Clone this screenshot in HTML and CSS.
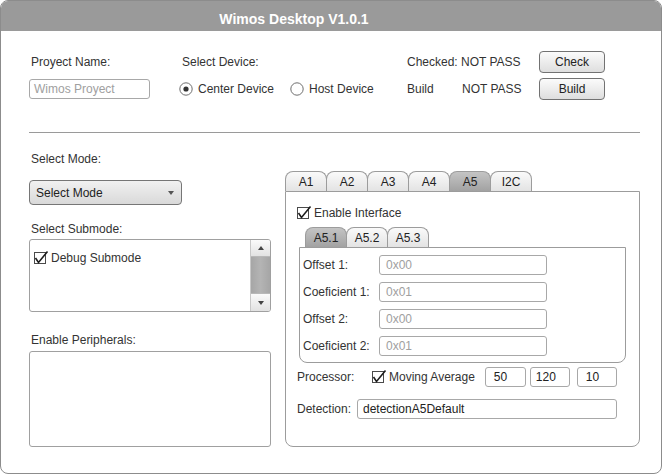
FILE: index.html
```html
<!DOCTYPE html>
<html>
<head>
<meta charset="utf-8">
<title>Wimos Desktop</title>
<link rel="stylesheet" href="styles.css">
</head>
<body>
<div class="window">
  <div class="titlebar">Wimos Desktop V1.0.1</div>
  <div class="content">
    <div class="top">
      <div class="lbl pl2">Proyect Name:</div>
      <div class="lbl pl3">Select Device:</div>
      <div class="lbl">Checked: NOT PASS</div>
      <div class="btn">Check</div>

      <div class="cell"><div class="input proj placeholder">Wimos Proyect</div></div>
      <div class="radios">
        <span class="radio">
          <svg width="14" height="14" viewBox="0 0 14 14"><circle cx="7" cy="7" r="6.2" fill="#fff" stroke="#6e6e6e" stroke-width="1"/><circle cx="7" cy="7" r="2.6" fill="#333"/></svg>
          Center Device
        </span>
        <span class="radio second">
          <svg width="14" height="14" viewBox="0 0 14 14"><circle cx="7" cy="7" r="6.2" fill="#fff" stroke="#6e6e6e" stroke-width="1"/></svg>
          Host Device
        </span>
      </div>
      <div class="status"><span class="st-key">Build</span><span>NOT PASS</span></div>
      <div class="btn">Build</div>
    </div>

    <div class="rule"></div>

    <div class="main">
      <div class="left">
        <div class="lbl pl2">Select Mode:</div>
        <div class="select">
          <span>Select Mode</span>
          <svg width="6" height="4" viewBox="0 0 6 4"><path d="M0 0 L6 0 L3 4 Z" fill="#555"/></svg>
        </div>
        <div class="lbl pl2 mt-sub">Select Submode:</div>
        <div class="listbox">
          <div class="list-items">
            <div class="check-row">
              <svg class="cb" width="15" height="15" viewBox="0 0 15 15"><rect x="0.5" y="2.5" width="11" height="11" fill="#fff" stroke="#4a4a4a"/><path d="M1.5 8 L4.5 12.5 L13.5 1.5" fill="none" stroke="#1e1e1e" stroke-width="1.6"/></svg>
              <span>Debug Submode</span>
            </div>
          </div>
          <div class="scrollbar">
            <div class="sb-btn"><svg width="6" height="4" viewBox="0 0 6 4"><path d="M0 4 L6 4 L3 0 Z" fill="#444"/></svg></div>
            <div class="sb-track"></div>
            <div class="sb-btn down"><svg width="6" height="4" viewBox="0 0 6 4"><path d="M0 0 L6 0 L3 4 Z" fill="#444"/></svg></div>
          </div>
        </div>
        <div class="lbl pl2 mt-per">Enable Peripherals:</div>
        <div class="perbox"></div>
      </div>

      <div class="right">
        <div class="tabs">
          <div class="tab">A1</div>
          <div class="tab">A2</div>
          <div class="tab">A3</div>
          <div class="tab">A4</div>
          <div class="tab active">A5</div>
          <div class="tab">I2C</div>
        </div>
        <div class="panel">
          <div class="check-row">
            <svg class="cb" width="15" height="15" viewBox="0 0 15 15"><rect x="0.5" y="2.5" width="11" height="11" fill="#fff" stroke="#4a4a4a"/><path d="M1.5 8 L4.5 12.5 L13.5 1.5" fill="none" stroke="#1e1e1e" stroke-width="1.6"/></svg>
            <span>Enable Interface</span>
          </div>
          <div class="tabs inner-tabs">
            <div class="tab active">A5.1</div>
            <div class="tab">A5.2</div>
            <div class="tab">A5.3</div>
          </div>
          <div class="inner-panel">
            <div class="lbl">Offset 1:</div>
            <div class="input field placeholder">0x00</div>
            <div class="lbl">Coeficient 1:</div>
            <div class="input field placeholder">0x01</div>
            <div class="lbl">Offset 2:</div>
            <div class="input field placeholder">0x00</div>
            <div class="lbl">Coeficient 2:</div>
            <div class="input field placeholder">0x01</div>
          </div>
          <div class="proc-row">
            <span class="proc-lbl">Processor:</span>
            <svg class="cb" width="15" height="15" viewBox="0 0 15 15"><rect x="0.5" y="2.5" width="11" height="11" fill="#fff" stroke="#4a4a4a"/><path d="M1.5 8 L4.5 12.5 L13.5 1.5" fill="none" stroke="#1e1e1e" stroke-width="1.6"/></svg>
            <span class="ma">Moving Average</span>
            <div class="input num n1">50</div>
            <div class="input num n2">120</div>
            <div class="input num n3">10</div>
          </div>
          <div class="det-row">
            <span class="det-lbl">Detection:</span>
            <div class="input det">detectionA5Default</div>
          </div>
        </div>
      </div>
    </div>
  </div>
</div>
</body>
</html>
```

FILE: styles.css
```css
* { box-sizing: border-box; }

body {
  margin: 0;
  font-family: "Liberation Sans", Arial, sans-serif;
  font-size: 12px;
  color: #333;
  background: #fff;
}

.window {
  width: 662px;
  height: 474px;
  border: 1px solid #8c8c8c;
  border-radius: 8px;
  overflow: hidden;
  display: flex;
  flex-direction: column;
}

.titlebar {
  height: 30px;
  flex: none;
  background: #9a9a9a;
  color: #fff;
  font-weight: bold;
  font-size: 14px;
  line-height: 16px;
  padding: 10px 74px 0 0;
  text-align: center;
}

.content {
  padding: 0 21px 0 28px;
}

.lbl {
  line-height: 14px;
  white-space: nowrap;
}
.pl2 { padding-left: 2px; }
.pl3 { padding-left: 3px; }

/* top section */
.top {
  display: grid;
  grid-template-columns: 150px 228px 132px 66px;
  grid-template-rows: 22px 22px;
  row-gap: 5px;
  align-items: center;
  padding-top: 20px;
}

.btn {
  height: 22px;
  border: 1px solid #727272;
  border-radius: 4px;
  background: linear-gradient(#fbfbfb, #dedede);
  color: #222;
  line-height: 20px;
  text-align: center;
}

.input {
  height: 20px;
  border: 1px solid #a8a8a8;
  border-radius: 3px;
  background: #fff;
  line-height: 18px;
  color: #222;
  white-space: nowrap;
}
.placeholder { color: #a0a0a0; }

.proj {
  width: 121px;
  padding-left: 4px;
}

.radios {
  display: flex;
  align-items: center;
}
.radio {
  display: flex;
  align-items: center;
  gap: 5px;
}
.radio.second { margin-left: 16px; }

.status { display: flex; }
.st-key { width: 55px; }

.rule {
  height: 1px;
  background: #9a9a9a;
  margin-top: 32px;
}

/* main */
.main {
  display: grid;
  grid-template-columns: 242px 355px;
  column-gap: 14px;
}

.left {
  padding-top: 19px;
  display: flex;
  flex-direction: column;
}

.select {
  margin-top: 14px;
  width: 153px;
  height: 25px;
  border: 1px solid #767676;
  border-radius: 4px;
  background: linear-gradient(#f1f1f1, #d9d9d9);
  display: flex;
  align-items: center;
  justify-content: space-between;
  padding: 0 7px 0 6px;
  color: #222;
}

.mt-sub { margin-top: 17px; }

.listbox {
  margin-top: 3px;
  height: 73px;
  border: 1px solid #a0a0a0;
  border-radius: 3px;
  display: flex;
  overflow: hidden;
}
.list-items {
  flex: 1;
  padding: 11px 0 0 4px;
}
.check-row {
  display: flex;
  align-items: center;
  gap: 2px;
  line-height: 14px;
  height: 14px;
}
.check-row .cb { margin-top: -1px; }

.scrollbar {
  width: 20px;
  display: flex;
  flex-direction: column;
  border-left: 1px solid #c8c8c8;
}
.sb-btn {
  height: 17px;
  background: linear-gradient(#fafafa, #e2e2e2);
  border-bottom: 1px solid #b8b8b8;
  display: flex;
  align-items: center;
  justify-content: center;
}
.sb-btn.down {
  border-bottom: none;
  border-top: 1px solid #b8b8b8;
  height: 18px;
}
.sb-track {
  flex: 1;
  background: linear-gradient(to right, #a6a6a6, #b4b4b4 50%, #a6a6a6);
}

.mt-per { margin-top: 21px; }

.perbox {
  margin-top: 4px;
  height: 96px;
  border: 1px solid #a0a0a0;
  border-radius: 3px;
}

/* right: tabs */
.right {
  padding-top: 38px;
}

.tabs {
  display: flex;
  height: 20px;
}
.tab {
  width: 42px;
  height: 20px;
  margin-right: -1px;
  border: 1px solid #9c9c9c;
  border-bottom: none;
  border-radius: 8px 8px 0 0;
  background: linear-gradient(#fafafa, #e3e3e3);
  color: #222;
  text-align: center;
  line-height: 20px;
}
.tab.active {
  background: linear-gradient(#c4c4c4, #a2a2a2);
}

.panel {
  height: 256px;
  border: 1px solid #9c9c9c;
  border-radius: 0 0 8px 8px;
  padding: 14px 0 0 11px;
}

.inner-tabs {
  margin-top: 7px;
  padding-left: 8px;
}

.inner-panel {
  margin-left: 2px;
  width: 327px;
  border: 1px solid #9c9c9c;
  border-radius: 0 0 8px 8px;
  padding: 7px 0 6px 3px;
  display: grid;
  grid-template-columns: 76px 168px;
  grid-auto-rows: 20px;
  row-gap: 7px;
  align-items: center;
}
.field {
  width: 168px;
  padding-left: 6px;
}

.proc-row {
  margin-top: 4px;
  height: 20px;
  display: flex;
  align-items: center;
}
.proc-lbl { width: 75px; }
.proc-row .cb { margin-top: -2px; }
.ma { margin-left: 2px; margin-right: 10px; }
.num {
  width: 41px;
  padding-left: 8px;
}
.n2 { margin-left: 4px; width: 40px; padding-left: 5px; }
.n3 { margin-left: 7px; width: 40px; padding-left: 8px; }

.det-row {
  margin-top: 12px;
  height: 20px;
  display: flex;
  align-items: center;
}
.det-lbl { width: 60px; }
.det {
  width: 260px;
  padding-left: 5px;
}
```
